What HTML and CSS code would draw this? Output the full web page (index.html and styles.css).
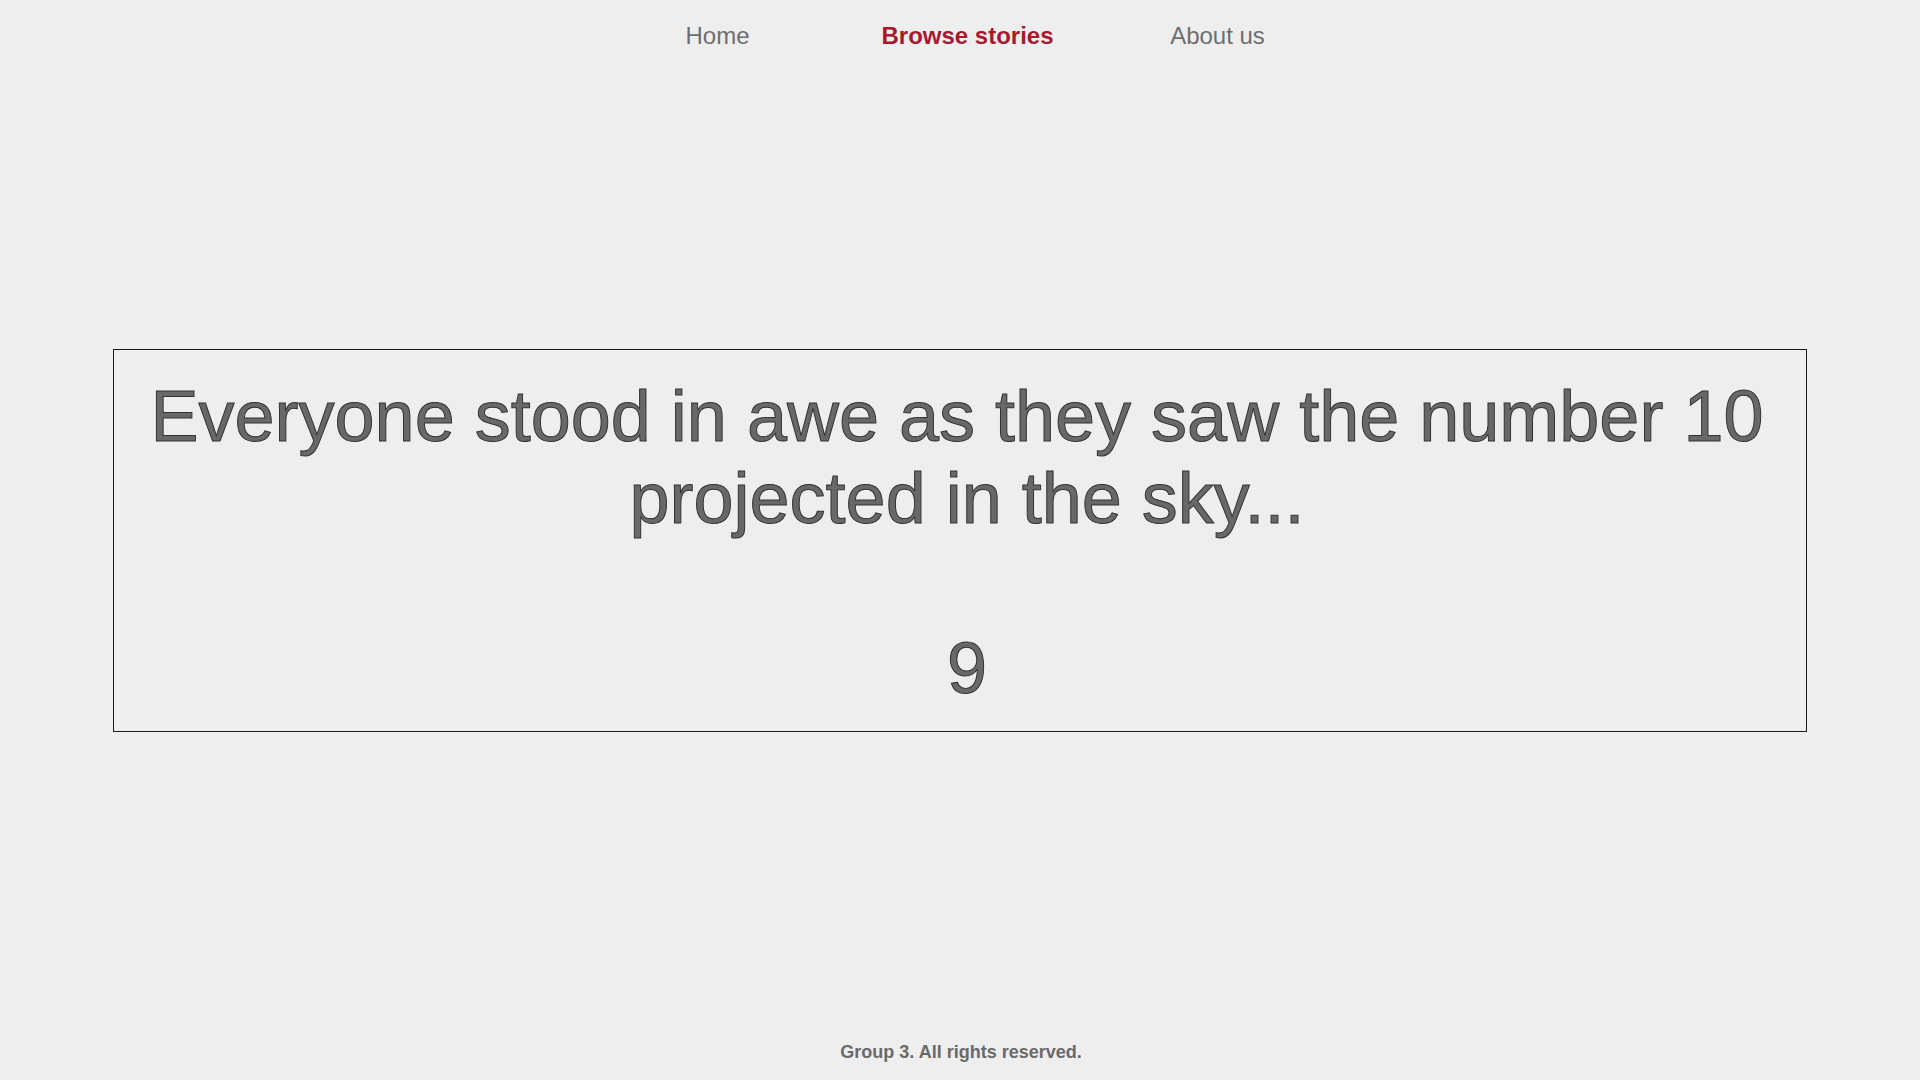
FILE: index.html
```html
<!DOCTYPE html>
<html lang="en">
<head>
<meta charset="utf-8">
<title>Browse stories</title>
<link rel="stylesheet" href="styles.css">
</head>
<body>
<div class="page">
  <header class="site-header">
    <nav class="nav">
      <a class="nav-item" href="#">Home</a>
      <a class="nav-item active" href="#">Browse stories</a>
      <a class="nav-item" href="#">About us</a>
    </nav>
  </header>
  <main class="main">
    <section class="story">
      <p class="story-text">Everyone stood in awe as they saw the number 10&nbsp;<br>projected in the sky...</p>
      <p class="story-count">9</p>
    </section>
  </main>
  <footer class="site-footer">
    <p class="footer-text">Group 3. All rights reserved.</p>
  </footer>
</div>
</body>
</html>
```

FILE: styles.css
```css
html, body {
  margin: 0;
  padding: 0;
  background: #eeeeee;
}

body {
  font-family: "Liberation Sans", Arial, Helvetica, sans-serif;
  color: #6b6b6b;
}

.page {
  height: 100vh;
  display: flex;
  flex-direction: column;
}

.site-header {
  height: 50px;
  box-sizing: border-box;
  padding-top: 22px;
}

.nav {
  display: flex;
  justify-content: center;
  padding-left: 15px;
}

.nav-item {
  width: 250px;
  text-align: center;
  font-size: 24px;
  line-height: 28px;
  color: #6e6e6e;
  text-decoration: none;
}

.nav-item.active {
  color: #a6192e;
  font-weight: bold;
}

.main {
  flex: 1;
  display: flex;
  align-items: center;
}

.story {
  flex: 1;
  margin: 0 113px;
  border: 1px solid #1a1a1a;
  padding: 25px 16px 22px 30px;
  text-align: center;
  font-size: 72px;
  color: #686868;
  -webkit-text-stroke: 1px #333333;
}

.story-text {
  margin: 0;
}

.story-count {
  margin: 88px 0 0;
}

.site-footer {
  height: 50px;
  box-sizing: border-box;
  padding-top: 12px;
  padding-left: 2px;
}

.footer-text {
  margin: 0;
  text-align: center;
  font-size: 18px;
  font-weight: bold;
  color: #6a6a6a;
}
```
